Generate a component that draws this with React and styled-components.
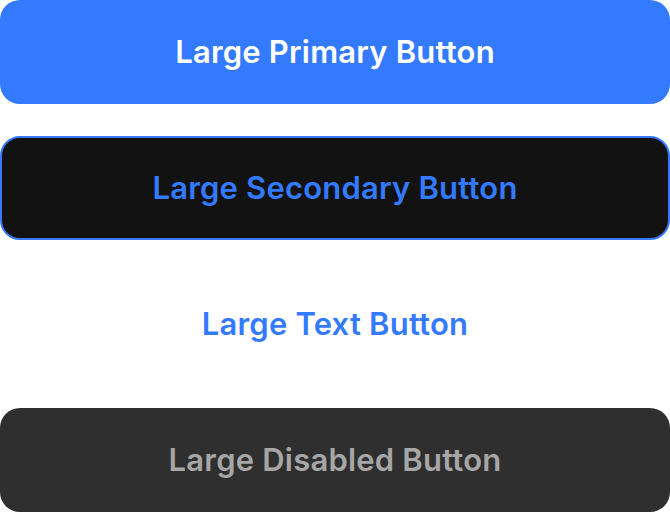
import React from 'react';
import styled, { createGlobalStyle } from 'styled-components';

const GlobalStyle = createGlobalStyle`
  body {
    margin: 0;
    background: #fff;
    font-family: Inter, 'Noto Sans', sans-serif;
  }
`;

const App = () => {
  return (
    <>
      <GlobalStyle />
      <Lista>
        <Boton variant="primary">Large Primary Button</Boton>
        <Boton variant="secondary">Large Secondary Button</Boton>
        <Boton variant="text">Large Text Button</Boton>
        <Boton variant="disabled" disabled>Large Disabled Button</Boton>
      </Lista>
    </>
  );
}

const variantes = {
  primary: { bg: '#347aff', color: '#ffffff', border: 'transparent' },
  secondary: { bg: '#121212', color: '#347aff', border: '#347aff' },
  text: { bg: 'transparent', color: '#347aff', border: 'transparent' },
  disabled: { bg: '#2f2f2f', color: '#a6a6a6', border: 'transparent' },
};

const Lista = styled.div`
  display: flex;
  flex-direction: column;
  gap: 32px;
  width: 670px;
`;

const Boton = styled.button`
  height: 104px;
  width: 100%;
  border-radius: 20px;
  border: 2px solid ${({ variant }) => variantes[variant].border};
  background: ${({ variant }) => variantes[variant].bg};
  color: ${({ variant }) => variantes[variant].color};
  font-family: Inter, 'Noto Sans', sans-serif;
  font-size: 31px;
  letter-spacing: 0.2px;
  font-weight: 560;
  display: flex;
  align-items: center;
  justify-content: center;
  padding: 0 0 2px;
  cursor: ${({ variant }) => (variant === 'disabled' ? 'default' : 'pointer')};
`;

export default App;
